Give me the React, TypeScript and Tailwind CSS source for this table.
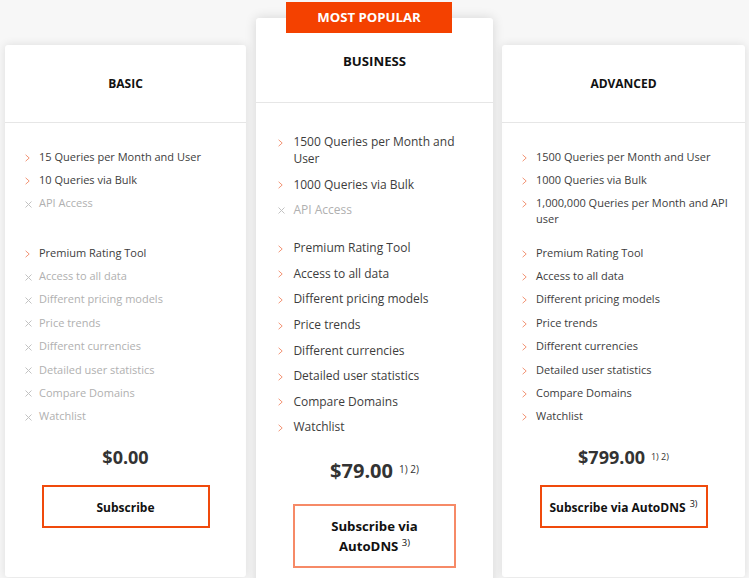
import type { ReactNode } from "react";

type Feature = { text: string; on: boolean };

interface Plan {
  name: string;
  first: Feature[];
  rest: Feature[];
  price: string;
  notes?: boolean;
  button: ReactNode;
}

const REST = [
  "Premium Rating Tool",
  "Access to all data",
  "Different pricing models",
  "Price trends",
  "Different currencies",
  "Detailed user statistics",
  "Compare Domains",
  "Watchlist",
];

const basic: Plan = {
  name: "BASIC",
  first: [
    { text: "15 Queries per Month and User", on: true },
    { text: "10 Queries via Bulk", on: true },
    { text: "API Access", on: false },
  ],
  rest: REST.map((text, i) => ({ text, on: i === 0 })),
  price: "$0.00",
  button: "Subscribe",
};

const business: Plan = {
  name: "BUSINESS",
  first: [
    { text: "1500 Queries per Month and User", on: true },
    { text: "1000 Queries via Bulk", on: true },
    { text: "API Access", on: false },
  ],
  rest: REST.map((text) => ({ text, on: true })),
  price: "$79.00",
  notes: true,
  button: (
    <>
      Subscribe via
      <br />
      AutoDNS <sup className="text-[9.5px] font-normal leading-none">3)</sup>
    </>
  ),
};

const advanced: Plan = {
  name: "ADVANCED",
  first: [
    { text: "1500 Queries per Month and User", on: true },
    { text: "1000 Queries via Bulk", on: true },
    { text: "1,000,000 Queries per Month and API user", on: true },
  ],
  rest: REST.map((text) => ({ text, on: true })),
  price: "$799.00",
  notes: true,
  button: (
    <>
      Subscribe via AutoDNS <sup className="ml-[1px] text-[9px] font-normal leading-none">3)</sup>
    </>
  ),
};

function Chevron() {
  return (
    <svg width="5" height="8" viewBox="0 0 5 8" className="translate-y-[1px]">
      <polyline points="0.6,0.8 4.2,4 0.6,7.2" fill="none" stroke="#f29576" strokeWidth="1" />
    </svg>
  );
}

function Cross() {
  return (
    <svg width="7" height="7" viewBox="0 0 7 7" className="translate-y-[1px]">
      <path d="M0.5 0.5 L6.5 6.5 M6.5 0.5 L0.5 6.5" stroke="#c2c2c2" strokeWidth="1" />
    </svg>
  );
}

function Item({ f, big }: { f: Feature; big?: boolean }) {
  return (
    <li
      className={
        big
          ? "flex py-[4.3px] text-[12px] leading-[17px]"
          : "flex py-[3.7px] text-[11px] leading-[16px]"
      }
    >
      <span
        className={
          big
            ? "flex h-[17px] w-[15.4px] shrink-0 items-center"
            : "flex h-[16px] w-[14px] shrink-0 items-center"
        }
      >
        {f.on ? <Chevron /> : <Cross />}
      </span>
      <span className={f.on ? "text-[#3d3d3d]" : "text-[#b0b0b0]"}>{f.text}</span>
    </li>
  );
}

function SideCard({ plan, width }: { plan: Plan; width: string }) {
  return (
    <div className={`mt-[45px] h-[532px] shrink-0 rounded-[3px] bg-white shadow-[0_0_10px_rgba(0,0,0,0.11)] ${width}`}>
      <div className="flex h-[78px] items-center justify-center border-b border-[#e6e6e6] text-[12px] font-bold text-[#111]">
        {plan.name}
      </div>
      <div className="pl-[20px] pr-[14px] pt-[22px]">
        <ul className="min-h-[96px]">
          {plan.first.map((f) => (
            <Item key={f.text} f={f} />
          ))}
        </ul>
        <ul>
          {plan.rest.map((f) => (
            <Item key={f.text} f={f} />
          ))}
        </ul>
      </div>
      <div className="mt-[17px] text-center text-[18px] font-bold leading-[24px] text-[#333]">
        {plan.price}
        {plan.notes && (
          <span className="relative -top-[4px] ml-[6px] text-[9px] font-normal leading-none">1) 2)</span>
        )}
      </div>
      <div className="mx-auto mt-[16px] flex h-[43px] w-[168px] items-center justify-center border-2 border-[#f04a0c] pt-[2px] text-[12px] font-bold text-[#111]">
        <span>{plan.button}</span>
      </div>
    </div>
  );
}

function PopularCard({ plan }: { plan: Plan }) {
  return (
    <div className="relative mt-[18px] h-[600px] w-[237px] shrink-0 rounded-[3px] bg-white shadow-[0_0_12px_rgba(0,0,0,0.14)]">
      <div className="absolute -top-[16px] left-[30px] flex h-[31px] w-[166px] items-center justify-center bg-[#f44100] text-[13.2px] font-bold text-white">
        MOST POPULAR
      </div>
      <div className="flex h-[85px] items-center justify-center border-b border-[#e6e6e6] pt-[4px] text-[13.2px] font-bold text-[#111]">
        {plan.name}
      </div>
      <div className="pl-[22px] pr-[16px] pt-[26px]">
        <ul className="min-h-[106px]">
          {plan.first.map((f) => (
            <Item key={f.text} f={f} big />
          ))}
        </ul>
        <ul>
          {plan.rest.map((f) => (
            <Item key={f.text} f={f} big />
          ))}
        </ul>
      </div>
      <div className="mt-[18px] text-center text-[20px] font-bold leading-[26px] text-[#333]">
        {plan.price}
        <span className="relative -top-[5px] ml-[6px] text-[10px] font-normal leading-none">1) 2)</span>
      </div>
      <div className="mx-auto mt-[20px] flex h-[64px] w-[163px] items-center justify-center border-2 border-[#f68a67] text-center text-[13.2px] font-bold leading-[20px] text-[#111]">
        <span>{plan.button}</span>
      </div>
    </div>
  );
}

export default function App() {
  return (
    <div className="flex h-[578px] items-start overflow-hidden bg-[#f7f7f7] pl-[5px] font-['Open_Sans',sans-serif]">
      <SideCard plan={basic} width="w-[241px]" />
      <div className="ml-[10px]">
        <PopularCard plan={business} />
      </div>
      <div className="ml-[9px]">
        <SideCard plan={advanced} width="w-[243px]" />
      </div>
    </div>
  );
}
